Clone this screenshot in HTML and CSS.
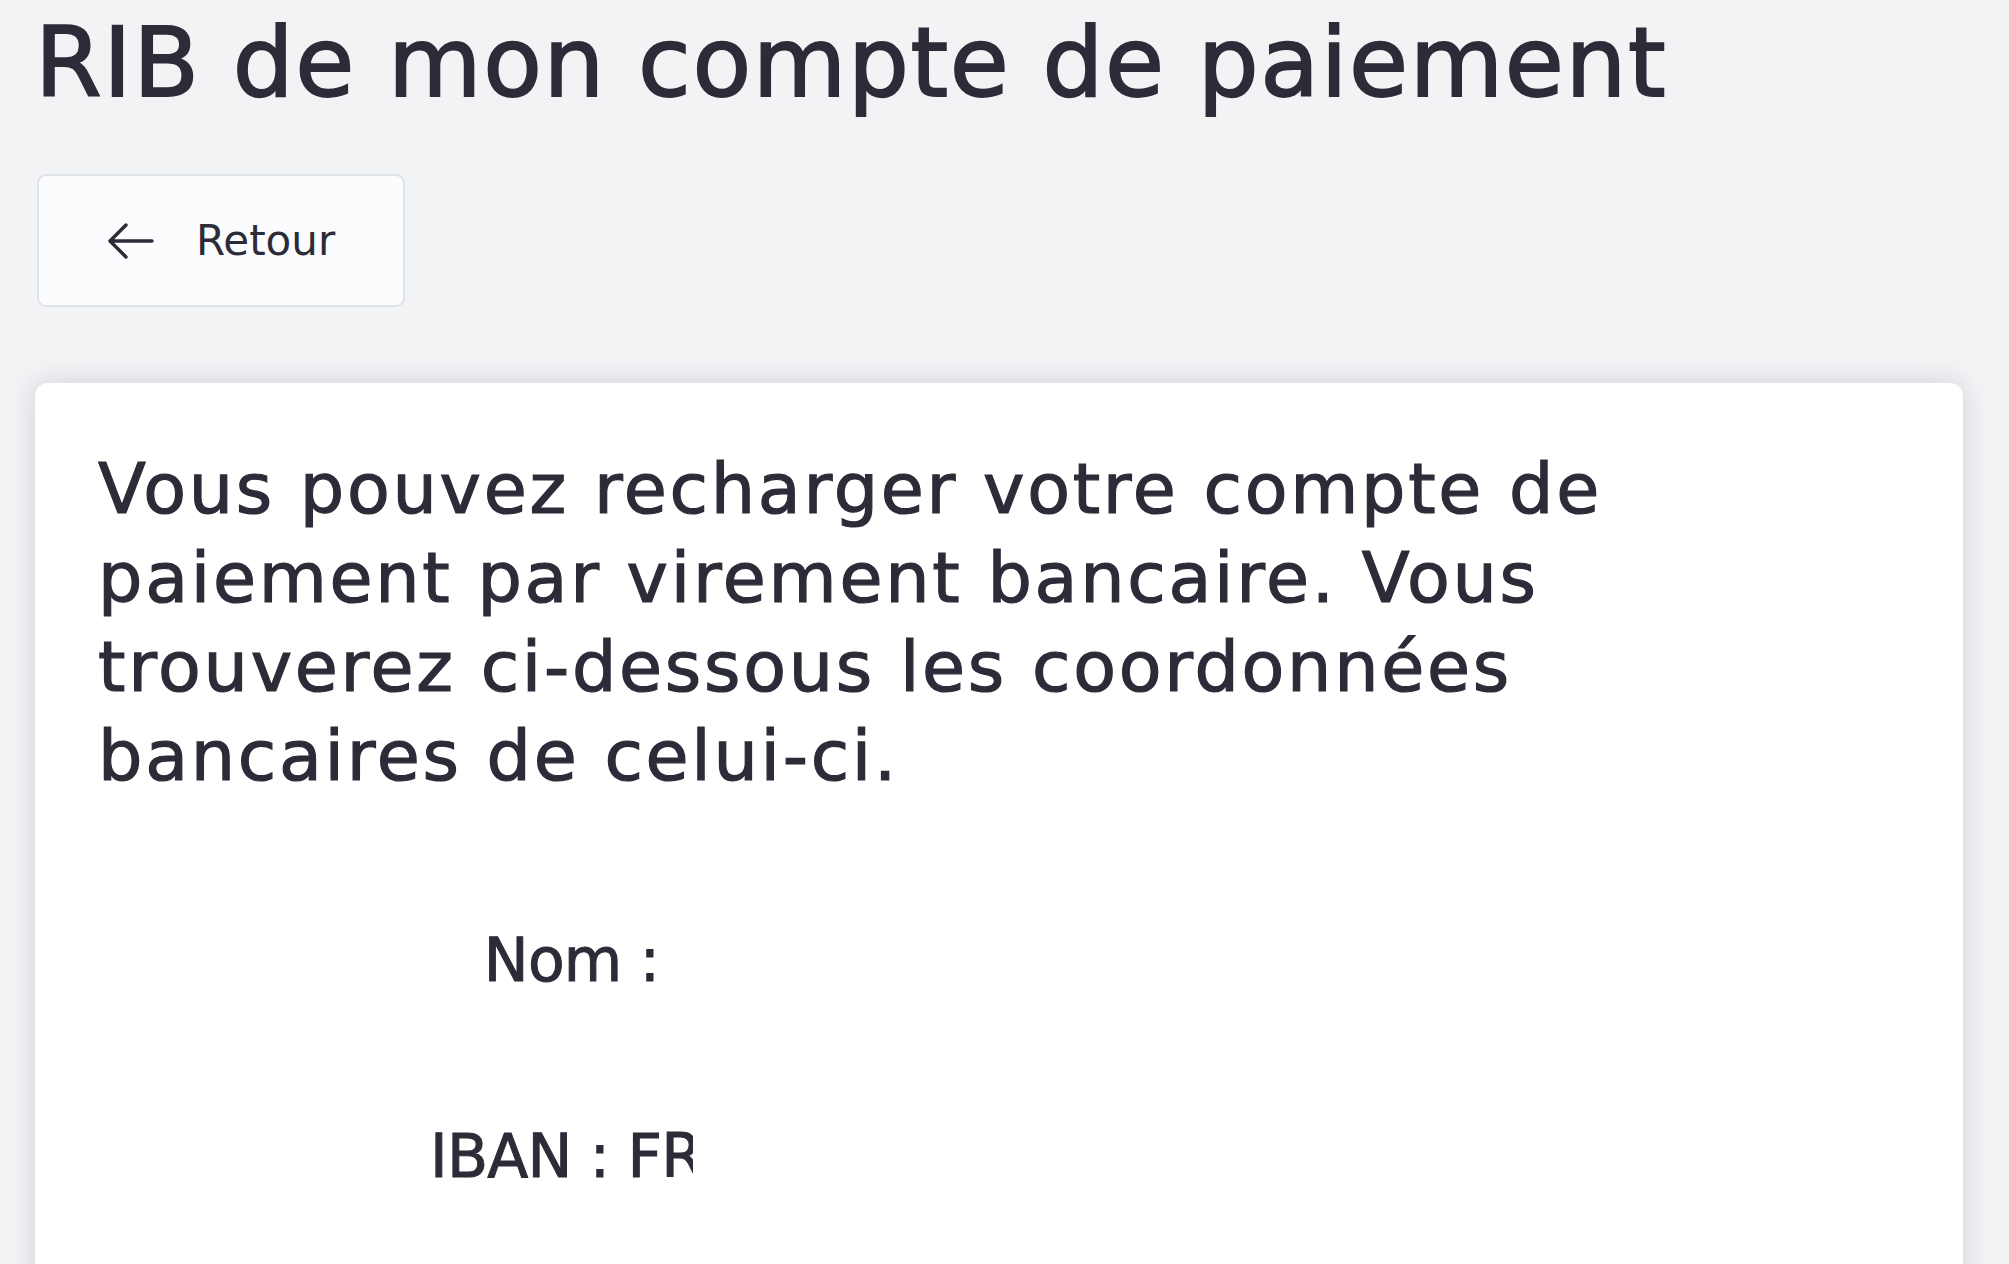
FILE: index.html
```html
<!DOCTYPE html>
<html lang="fr">
<head>
<meta charset="utf-8">
<title>RIB de mon compte de paiement</title>
<link rel="stylesheet" href="styles.css">
</head>
<body>
<main class="page">
  <h1 class="title">RIB de mon compte de paiement</h1>
  <button class="back-btn" type="button">
    <svg class="back-icon" width="48" height="36" viewBox="0 0 48 36" aria-hidden="true">
      <path d="M45 18H3M19 2L3 18l16 16" fill="none" stroke="currentColor" stroke-width="3.4" stroke-linecap="round" stroke-linejoin="round"/>
    </svg>
    <span>Retour</span>
  </button>
  <section class="card">
    <p class="intro">Vous pouvez recharger votre compte de paiement par virement bancaire. Vous trouverez ci-dessous les coordonnées bancaires de celui-ci.</p>
    <div class="rib">
      <div class="rib-row rib-row--name">Nom :</div>
      <div class="rib-row">IBAN : FR76 3000 4000 0312 3456 7890 143</div>
      <div class="rib-row">BIC : BNPAFRPPXXX</div>
    </div>
  </section>
</main>
</body>
</html>
```
FILE: styles.css
```css
html, body {
  margin: 0;
  padding: 0;
  background: #f2f3f5;
}
body {
  font-family: "DejaVu Sans", "Noto Sans", sans-serif;
  color: #2c2c39;
}
.page {
  padding: 6px 46px 0 35px;
  display: flex;
  flex-direction: column;
  align-items: flex-start;
}
.title {
  margin: 0;
  font-size: 96px;
  font-weight: normal;
  line-height: 115px;
  letter-spacing: 1.6px;
  white-space: nowrap;
  -webkit-text-stroke: 1.8px #2c2c39;
}
.back-btn {
  margin: 53px 0 0 2px;
  height: 133px;
  box-sizing: border-box;
  display: flex;
  align-items: center;
  gap: 41px;
  padding: 0 68px 0 68px;
  background: #fbfcfe;
  border: 2px solid #dfe2e6;
  border-radius: 9px;
  font-family: inherit;
  font-size: 42px;
  color: #2c2c39;
  cursor: pointer;
}
.back-icon {
  display: block;
  color: #2c2c39;
}
.card {
  align-self: stretch;
  margin-top: 76px;
  background: #ffffff;
  border-radius: 13px;
  box-shadow: 0 0 26px 2px rgba(30, 30, 55, 0.13);
  padding: 62px 63px 140px;
}
.intro {
  margin: 0;
  max-width: 1680px;
  font-size: 70px;
  line-height: 89px;
  letter-spacing: 2.7px;
  -webkit-text-stroke: 1.2px #2c2c39;
}
.rib {
  margin-top: 123px;
  width: 263px;
  margin-left: 332px;
  display: flex;
  flex-direction: column;
  gap: 124px;
  overflow: hidden;
}
.rib-row {
  font-size: 60px;
  line-height: 72px;
  letter-spacing: -0.8px;
  white-space: nowrap;
  text-align: center;
  -webkit-text-stroke: 1px #2c2c39;
}
.rib-row--name {
  padding-left: 20px;
}
```
